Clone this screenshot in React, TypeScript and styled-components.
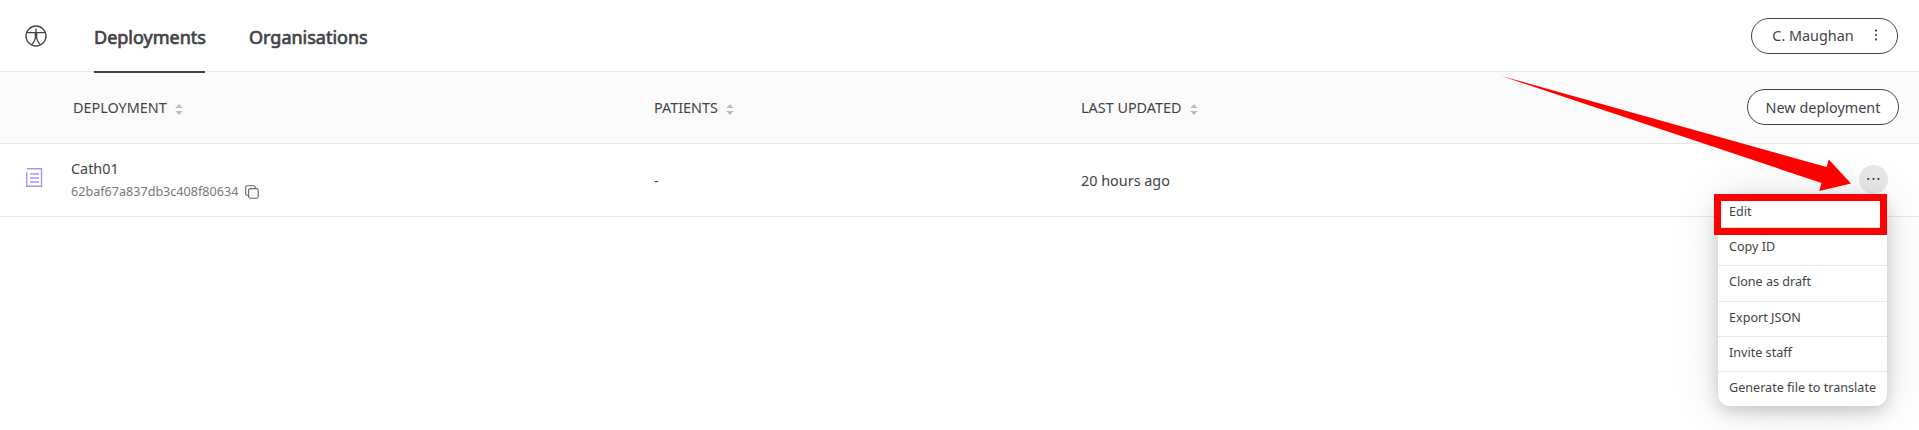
import React from "react";
import styled, { createGlobalStyle } from "styled-components";

const Global = createGlobalStyle`
  *, *::before, *::after { box-sizing: border-box; }
  body {
    margin: 0;
    background: #fff;
    color: #424347;
    font-family: "Noto Sans", sans-serif;
    font-size: 14.4px;
    overflow: hidden;
  }
  button { font: inherit; color: inherit; padding: 0; }
`;

const Page = styled.div`
  position: relative;
  width: 100%;
  height: 430px;
  overflow: hidden;
`;

const TopBar = styled.header`
  display: flex;
  align-items: center;
  height: 72px;
  padding: 0 21px 0 25px;
  border-bottom: 1px solid #e7e7e7;
`;

const Logo = styled.svg`
  width: 22px;
  height: 22px;
  margin-right: 47px;
`;

const Nav = styled.nav`
  display: flex;
  flex: 1;
  gap: 44px;
`;

const Tab = styled.a<{ $active?: boolean; $width: number }>`
  width: ${(p) => p.$width}px;
  height: 74px;
  margin-top: 1px;
  padding-top: 4px;
  line-height: 68px;
  font-size: 18px;
  white-space: nowrap;
  -webkit-text-stroke: 0.7px currentColor;
  border-bottom: 2px solid ${(p) => (p.$active ? "#424347" : "transparent")};
`;

const PillButton = styled.button<{ $width: number }>`
  display: flex;
  align-items: center;
  justify-content: center;
  width: ${(p) => p.$width}px;
  height: 36px;
  border: 1px solid #424347;
  border-radius: 18px;
  background: #fff;
`;

const Kebab = styled.svg`
  width: 4px;
  height: 12px;
  margin: -2px -1px 0 20px;
`;

const Row = styled.div<{ $head?: boolean; $height: number }>`
  display: grid;
  grid-template-columns: 71px 583px 427px 1fr auto;
  align-items: center;
  height: ${(p) => p.$height}px;
  border-bottom: 1px solid #e7e7e7;
  background: ${(p) => (p.$head ? "#fbfbfb" : "#fff")};
`;

const HeadCell = styled.div<{ $inset?: number }>`
  display: flex;
  align-items: center;
  gap: 8px;
  padding: 0 0 1px ${(p) => p.$inset ?? 0}px;
`;

const SortIcon = styled.svg`
  width: 8px;
  height: 11px;
  margin-top: 5px;
`;

const Cell = styled.div`
  line-height: 20px;
  padding-top: 1px;
`;

const DocIcon = styled.svg`
  width: 18px;
  height: 21px;
  margin: -6px 0 0 25px;
`;

const Name = styled.div`
  line-height: 20px;
`;

const Identifier = styled.div`
  display: flex;
  align-items: center;
  gap: 7px;
  margin-top: 3px;
  font-size: 12.6px;
  line-height: 20px;
  color: #77787c;
`;

const Actions = styled.div<{ $right: number }>`
  padding: 0 ${(p) => p.$right}px 1px 0;
`;

const MoreButton = styled.button`
  display: flex;
  align-items: center;
  justify-content: center;
  width: 29px;
  height: 29px;
  border: 0;
  border-radius: 50%;
  background: #e9e9e9;
`;

const Menu = styled.ul`
  position: absolute;
  top: 195px;
  right: 32px;
  width: 169px;
  margin: 0;
  padding: 0;
  list-style: none;
  border-radius: 12px;
  background: #fff;
  box-shadow: 0 5px 16px rgba(0, 0, 0, 0.18), 0 2px 50px rgba(0, 0, 0, 0.12);
`;

const MenuItem = styled.li`
  height: 35.2px;
  padding-left: 11px;
  border-top: 1px solid transparent;
  font-size: 12.6px;
  line-height: 32.8px;
  white-space: nowrap;
  & + & { border-top-color: #e7e7e7; }
`;

const Highlight = styled.div`
  position: absolute;
  top: 194px;
  right: 32px;
  width: 173px;
  height: 41px;
  border: 7px solid #f00;
  box-shadow: inset 0 -1px 0 #ecdcdc;
`;

const Arrow = styled.svg`
  position: absolute;
  top: 72px;
  left: 1500px;
  width: 356px;
  height: 124px;
`;

const Sort = () => (
  <SortIcon viewBox="0 0 8 11" fill="#bdbdbd">
    <path d="M4 0 7.7 4H.3zM4 11 .3 7h7.4z" />
  </SortIcon>
);

const actions = ["Edit", "Copy ID", "Clone as draft", "Export JSON", "Invite staff", "Generate file to translate"];

export default function App() {
  return (
    <Page>
      <Global />
      <TopBar>
        <Logo viewBox="0 0 22 22" fill="none" stroke="#424347" strokeWidth="1.3">
          <circle cx="11" cy="11" r="10" />
          <path d="M1.7 7.6h18.6M11 3.5v8.5M10.4 8v4.8Q9.8 16 7 19.7M11.6 8v4.8Q12.2 16 15 19.7" />
        </Logo>
        <Nav>
          <Tab $active $width={111}>Deployments</Tab>
          <Tab $width={119}>Organisations</Tab>
        </Nav>
        <PillButton $width={147}>
          C. Maughan
          <Kebab viewBox="0 0 4 12" fill="#424347">
            <circle cx="2" cy="1.6" r="1.1" />
            <circle cx="2" cy="6" r="1.1" />
            <circle cx="2" cy="10.4" r="1.1" />
          </Kebab>
        </PillButton>
      </TopBar>

      <Row $head $height={72}>
        <span />
        <HeadCell $inset={2}>DEPLOYMENT <Sort /></HeadCell>
        <HeadCell>PATIENTS <Sort /></HeadCell>
        <HeadCell>LAST UPDATED <Sort /></HeadCell>
        <Actions $right={20}>
          <PillButton $width={152}>New deployment</PillButton>
        </Actions>
      </Row>

      <Row $height={73}>
        <DocIcon viewBox="0 0 18 21" fill="none" stroke="#a695f5" strokeWidth="1.4">
          <path d="M2 1.7h14.5v17.6H1.7V5M5 7h9M5 11h9M5 15h9" />
        </DocIcon>
        <div>
          <Name>Cath01</Name>
          <Identifier>
            62baf67a837db3c408f80634
            <svg width="14" height="14" viewBox="0 0 14 14" fill="none" stroke="#66676b" strokeWidth="1.1">
              <rect x="3.6" y="3.6" width="9.6" height="9.6" rx="1.6" />
              <path d="M3.5 10.2H2A1.4 1.4 0 0 1 .7 8.8V2A1.4 1.4 0 0 1 2 .7h6.8A1.4 1.4 0 0 1 10.2 2v1.5" />
            </svg>
          </Identifier>
        </div>
        <Cell>-</Cell>
        <Cell>20 hours ago</Cell>
        <Actions $right={31}>
          <MoreButton aria-label="More actions">
            <svg width="13" height="4" viewBox="0 0 13 4" fill="#424347">
              <circle cx="1.2" cy="1" r="1.1" />
              <circle cx="6.5" cy="1" r="1.1" />
              <circle cx="11.4" cy="1" r="1.1" />
            </svg>
          </MoreButton>
        </Actions>
      </Row>

      <Menu>
        {actions.map((label) => (
          <MenuItem key={label}>{label}</MenuItem>
        ))}
      </Menu>
      <Highlight />
      <Arrow viewBox="1500 72 356 124" fill="#f00">
        <path d="M1501.5 76 1826.6 167 1828.8 159.5 1851 183.5 1819.3 191 1821.5 183z" />
      </Arrow>
    </Page>
  );
}
